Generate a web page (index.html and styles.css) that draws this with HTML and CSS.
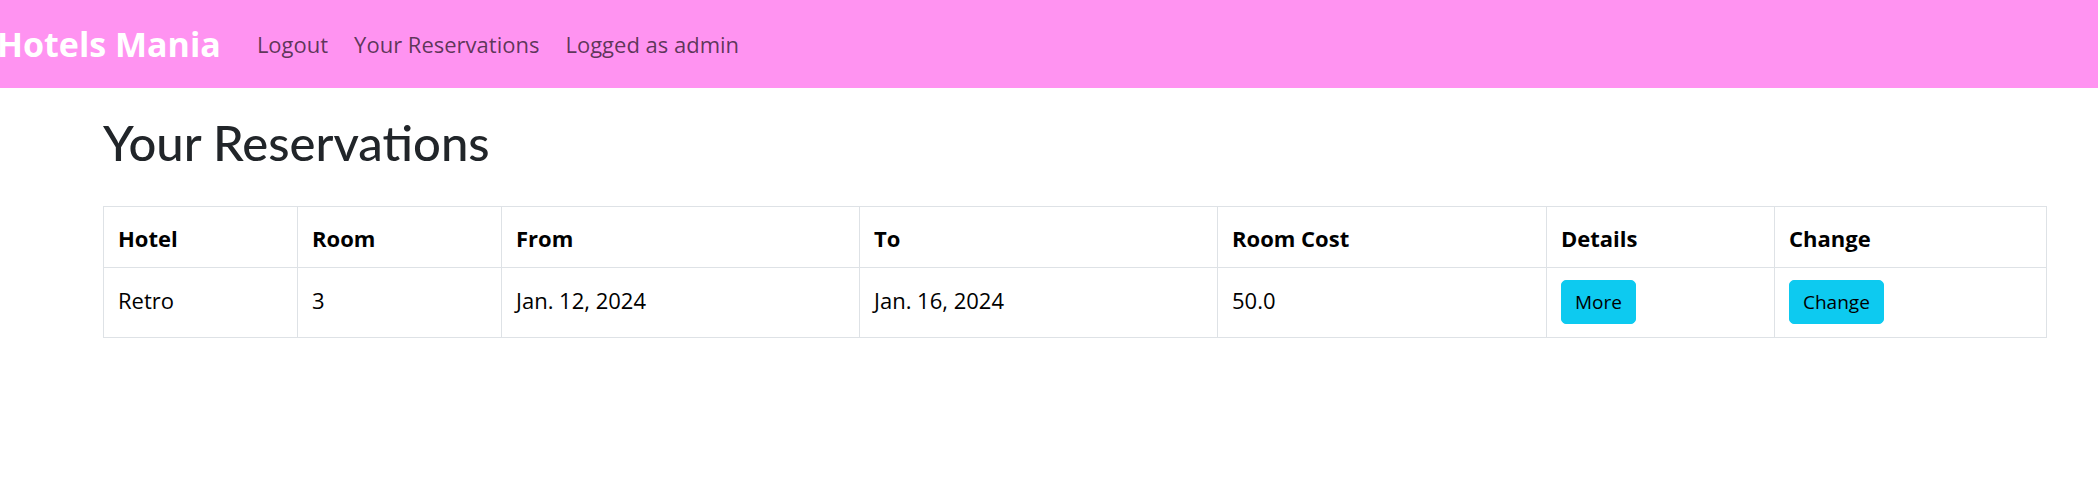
FILE: index.html
```html
<!DOCTYPE html>
<html lang="en">
<head>
<meta charset="utf-8">
<title>Your Reservations</title>
<link rel="stylesheet" href="styles.css">
</head>
<body>
<nav class="navbar">
  <a class="brand" href="#">Hotels Mania</a>
  <ul class="nav-links">
    <li><a class="nav-link" href="#">Logout</a></li>
    <li><a class="nav-link" href="#">Your Reservations</a></li>
    <li><span class="nav-link">Logged as admin</span></li>
  </ul>
</nav>
<main class="container">
  <h1 class="page-title">Your Reservations</h1>
  <table class="res-table">
    <colgroup>
      <col class="c-hotel">
      <col class="c-room">
      <col class="c-from">
      <col class="c-to">
      <col class="c-cost">
      <col class="c-details">
      <col class="c-change">
    </colgroup>
    <thead>
      <tr>
        <th>Hotel</th>
        <th>Room</th>
        <th>From</th>
        <th>To</th>
        <th>Room Cost</th>
        <th>Details</th>
        <th>Change</th>
      </tr>
    </thead>
    <tbody>
      <tr>
        <td>Retro</td>
        <td>3</td>
        <td>Jan. 12, 2024</td>
        <td>Jan. 16, 2024</td>
        <td>50.0</td>
        <td><a class="btn" href="#">More</a></td>
        <td><a class="btn" href="#">Change</a></td>
      </tr>
    </tbody>
  </table>
</main>
</body>
</html>
```
FILE: styles.css
```css
* { box-sizing: border-box; }

body {
  margin: 0;
  font-family: "Open Sans", "Liberation Sans", sans-serif;
  font-size: 22px;
  line-height: 1.5;
  color: #212529;
  background: #fff;
}

.navbar {
  height: 88px;
  background: #ff93f1;
  display: flex;
  align-items: center;
}

.brand {
  margin-left: -3px;
  font-size: 34px;
  font-weight: 700;
  color: #fff;
  text-decoration: none;
  line-height: 1.5;
}

.nav-links {
  list-style: none;
  margin: 0 0 0 36px;
  padding: 0;
  display: flex;
  gap: 26px;
}

.nav-link {
  color: rgba(0, 0, 0, 0.65);
  text-decoration: none;
  font-size: 22px;
}

.container {
  padding-left: 103px;
}

.page-title {
  margin: 24px 0 0;
  font-family: Lato, "Open Sans", sans-serif;
  font-size: 49px;
  font-weight: 500;
  line-height: 60px;
  color: #212529;
}

.res-table {
  margin-top: 34px;
  width: 1943px;
  table-layout: fixed;
  border-collapse: collapse;
  color: #000;
}

.c-hotel { width: 194px; }
.c-room { width: 204px; }
.c-from { width: 358px; }
.c-to { width: 358px; }
.c-cost { width: 329px; }
.c-details { width: 228px; }
.c-change { width: 272px; }

.res-table th,
.res-table td {
  border: 1px solid #dee2e6;
  text-align: left;
  vertical-align: baseline;
  padding: 0 14px;
}

.res-table th {
  font-weight: 700;
  padding-top: 15px;
  padding-bottom: 12px;
}

.res-table td {
  padding-top: 12px;
  padding-bottom: 13px;
}

.btn {
  display: inline-block;
  font-size: 19px;
  line-height: 1.5;
  padding: 6.5px 13px;
  color: #000;
  background: #0dcaf0;
  border: 1px solid #0dcaf0;
  border-radius: 5px;
  text-decoration: none;
}
```
